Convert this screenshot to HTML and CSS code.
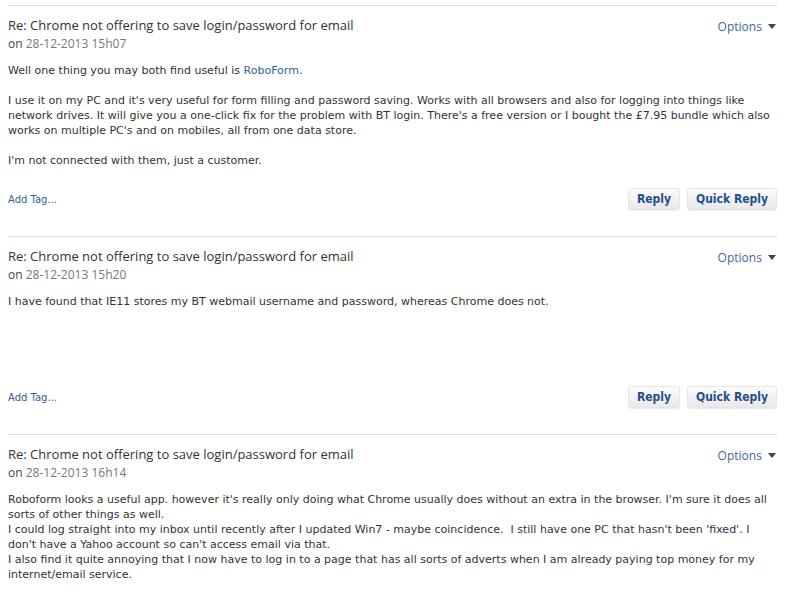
FILE: index.html
```html
<!DOCTYPE html>
<html>

<head>
  <title>Re: Chrome not offering to save login/password for email</title>
  <link rel="stylesheet" href="styles.css">
</head>

<body>
  <main class="thread">
    <div class="post">
      <div class="post-head">
        <div class="post-title">
          <div class="subject">Re: Chrome not offering to save login/password for email</div>
          <div class="post-date">on <span class="date">28-12-2013 15h07</span></div>
        </div>
        <a class="options">Options <span class="caret"></span></a>
      </div>
      <div class="post-body">
        <p>Well one thing you may both find useful is <a class="link">RoboForm</a>.</p>
        <p>I use it on my PC and it's very useful for form filling and password saving. Works with all browsers and also for logging into things like network drives. It will give you a one-click fix for the problem with BT login. There's a free version or I bought the £7.95 bundle which also works on multiple PC's and on mobiles, all from one data store.</p>
        <p>I'm not connected with them, just a customer.</p>
      </div>
      <div class="post-foot">
        <a class="add-tag">Add Tag...</a>
        <div class="btns">
          <button class="btn">Reply</button>
          <button class="btn">Quick Reply</button>
        </div>
      </div>
    </div>

    <div class="post">
      <div class="post-head">
        <div class="post-title">
          <div class="subject">Re: Chrome not offering to save login/password for email</div>
          <div class="post-date">on <span class="date">28-12-2013 15h20</span></div>
        </div>
        <a class="options">Options <span class="caret"></span></a>
      </div>
      <div class="post-body">
        <p>I have found that IE11 stores my BT webmail username and password, whereas Chrome does not.</p>
      </div>
      <div class="post-foot">
        <a class="add-tag">Add Tag...</a>
        <div class="btns">
          <button class="btn">Reply</button>
          <button class="btn">Quick Reply</button>
        </div>
      </div>
    </div>

    <div class="post">
      <div class="post-head">
        <div class="post-title">
          <div class="subject">Re: Chrome not offering to save login/password for email</div>
          <div class="post-date">on <span class="date">28-12-2013 16h14</span></div>
        </div>
        <a class="options">Options <span class="caret"></span></a>
      </div>
      <div class="post-body">
        <p>Roboform looks a useful app. however it's really only doing what Chrome usually does without an extra in the browser. I'm sure it does all sorts of other things as well.<br>
          I could log straight into my inbox until recently after I updated Win7 - maybe coincidence.&nbsp; I still have one PC that hasn't been 'fixed'. I don't have a Yahoo account so can't access email via that.<br>
          I also find it quite annoying that I now have to log in to a page that has all sorts of adverts when I am already paying top money for my internet/email service.</p>
      </div>
    </div>
  </main>
</body>

</html>
```

FILE: styles.css
```css
body {
  margin: 0;
  background-color: white;
  font-family: "DejaVu Sans", Verdana, sans-serif;
  font-size: 11px;
  color: #333333;
}

a {
  color: #2f5f98;
  text-decoration: none;
  cursor: pointer;
}

.thread {
  width: 769px;
  padding: 5px 0 0 8px;
}

.post {
  border-top: 1px solid #dddddd;
  padding-top: 10px;
}

.post-head {
  display: flex;
  justify-content: space-between;
  align-items: flex-start;
}

.subject {
  font-family: "Open Sans", Arial, sans-serif;
  font-size: 13px;
  color: #333333;
  line-height: 18px;
}

.post-date {
  font-family: "Open Sans", Arial, sans-serif;
  font-size: 12px;
  color: #444444;
  line-height: 19px;
}

.date {
  color: #777777;
}

.options {
  font-family: "Open Sans", Arial, sans-serif;
  font-size: 12px;
  color: #3d6b99;
  margin-top: 2px;
  padding-right: 1px;
}

.caret {
  display: inline-block;
  width: 0;
  height: 0;
  border-left: 4px solid transparent;
  border-right: 4px solid transparent;
  border-top: 5px solid #444444;
  margin-left: 3px;
  vertical-align: 2px;
}

.post-body {
  padding-top: 10px;
  line-height: 15px;
  min-height: 87px;
}

.post-body p {
  margin: 0 0 15px 0;
}

.post-foot {
  display: flex;
  justify-content: space-between;
  align-items: center;
  padding: 5px 0 26px 0;
}

.add-tag {
  font-size: 10px;
}

.btns {
  display: flex;
  column-gap: 7px;
}

.btn {
  font-family: "DejaVu Sans Condensed", "DejaVu Sans", sans-serif;
  font-size: 12px;
  font-weight: bold;
  color: #1f4f8f;
  height: 22px;
  padding: 0 8px;
  border: 1px solid #e6e6e6;
  border-radius: 3px;
  background: linear-gradient(#fbfbfb, #e9e9e9);
  box-shadow: 0 1px 1px rgba(0, 0, 0, 0.08);
}
```
